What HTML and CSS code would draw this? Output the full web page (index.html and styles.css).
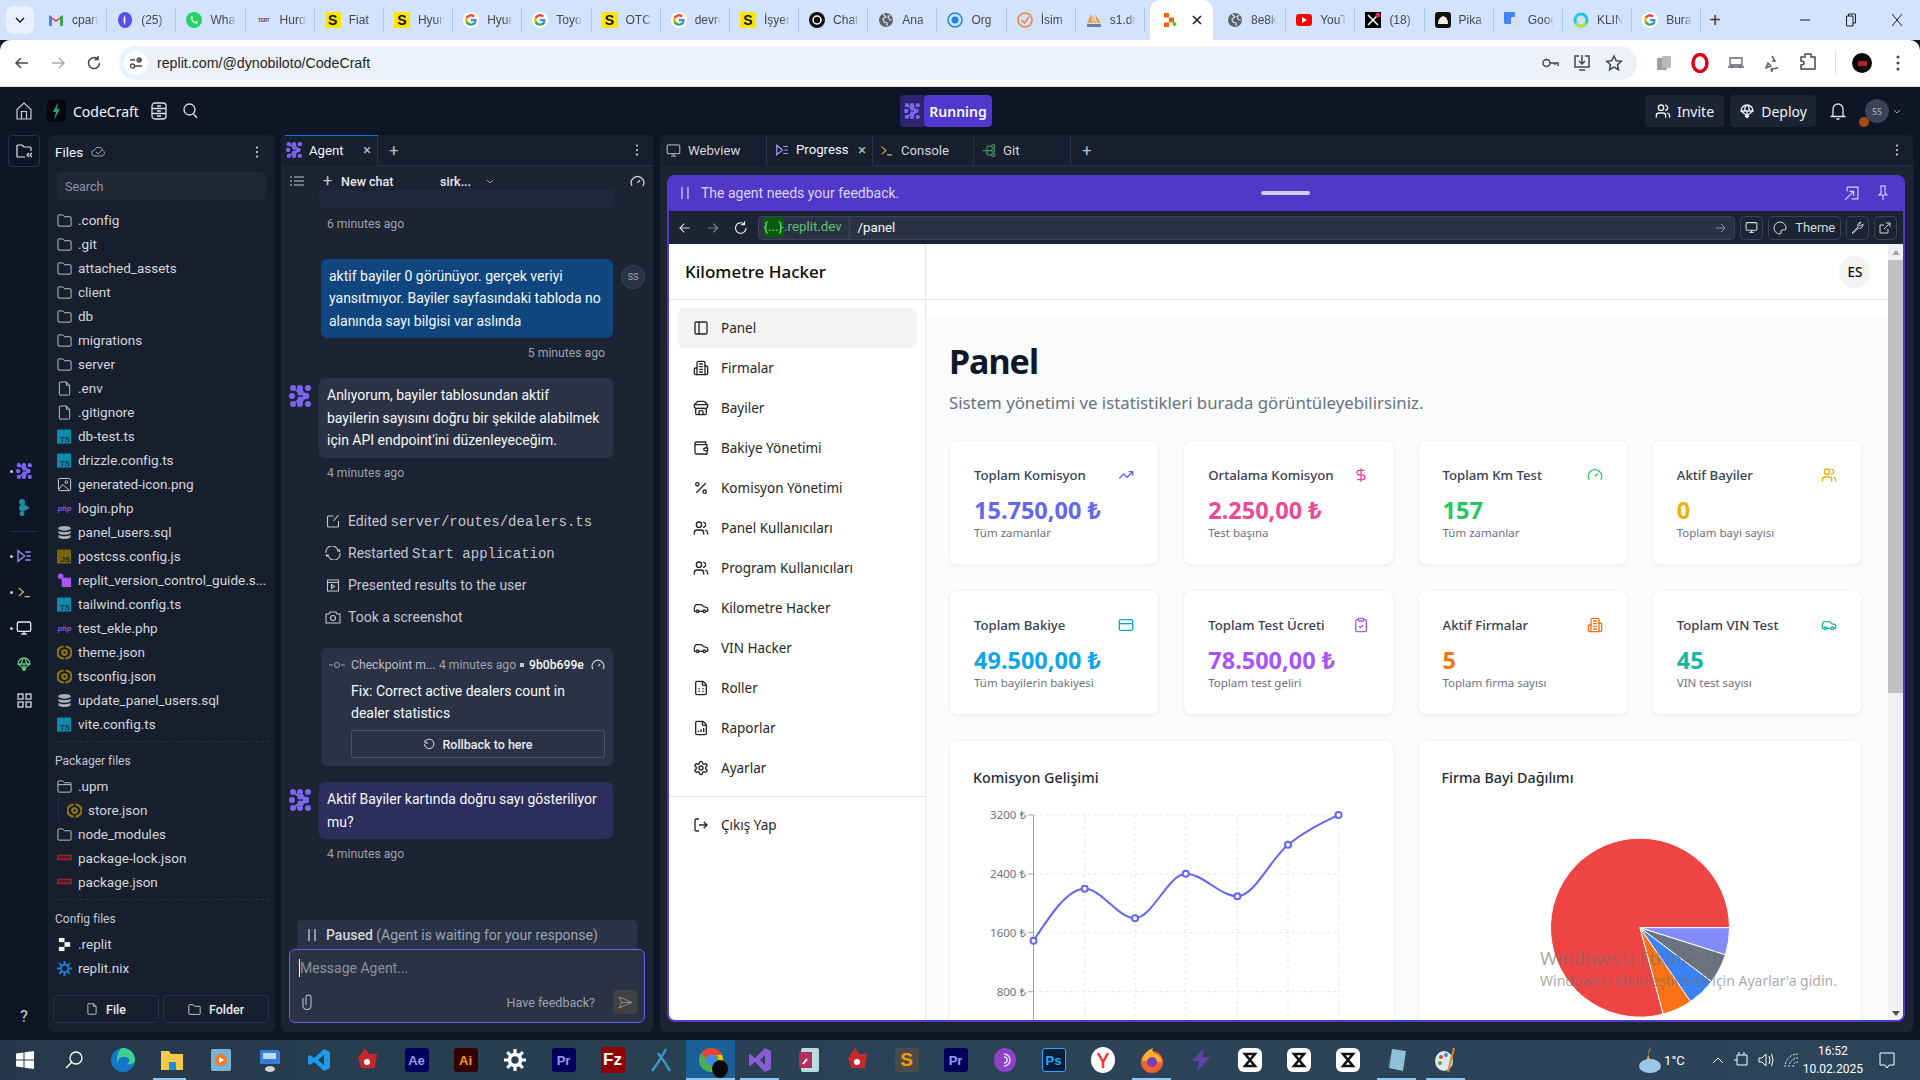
FILE: index.html
```html
<!DOCTYPE html>
<html lang="tr">
<head>
    <meta charset="UTF-8">
    <title>CodeCraft - Replit</title>
    <link rel="stylesheet" href="styles.css">
</head>
<body>
<svg class="defs" width="0" height="0">
    <symbol id="i-agent" viewBox="0 0 22 22"><g fill="#7c65f0"><circle cx="4" cy="3" r="3"/><circle cx="11" cy="3" r="3"/><circle cx="19" cy="3" r="3"/><circle cx="3" cy="11" r="3"/><circle cx="11" cy="8" r="2.6"/><circle cx="17" cy="11" r="3.2"/><circle cx="11" cy="14" r="2.6"/><circle cx="4" cy="19" r="3"/><circle cx="11" cy="19" r="3"/><circle cx="19" cy="19" r="3"/></g><path d="M4 3l7 5 6 3-6 3-7 5M11 3l6 8-6 8" fill="none" stroke="#7c65f0" stroke-width="2"/></symbol>
    <symbol id="i-folder" viewBox="0 0 16 16"><path fill="none" stroke="currentColor" d="M1 13V3q0-1 1-1h4l2 2h6q1 0 1 1v8q0 1-1 1H2q-1 0-1-1z"/></symbol>
    <symbol id="i-openfolder" viewBox="0 0 16 16"><path fill="none" stroke="currentColor" d="M1 13V3q0-1 1-1h4l2 2h6q1 0 1 1v1H1m0 7q0 1 1 1h12q1 0 1-1V6"/></symbol>
    <symbol id="i-file" viewBox="0 0 16 16"><path fill="none" stroke="currentColor" d="M2.5 2q0-1 1-1H10l3.5 3.5V14q0 1-1 1h-9q-1 0-1-1zM10 1v3.5h3.5"/></symbol>
    <symbol id="i-ts" viewBox="0 0 16 16"><rect width="15" height="15" y=".5" fill="#0c8ba8"/><text x="14" y="14" font-size="8.5" font-weight="700" text-anchor="end" fill="#153447" font-family="Liberation Sans">TS</text></symbol>
    <symbol id="i-js" viewBox="0 0 16 16"><rect width="15" height="15" y=".5" fill="#7a6408"/><text x="14" y="14" font-size="8.5" font-weight="700" text-anchor="end" fill="#1c2333" font-family="Liberation Sans">JS</text></symbol>
    <symbol id="i-php" viewBox="0 0 16 16"><text x="8" y="11" font-size="8" font-style="italic" font-weight="700" text-anchor="middle" fill="#8b4fe0" font-family="Liberation Sans">php</text></symbol>
    <symbol id="i-db" viewBox="0 0 16 16"><g fill="#a8adb5"><ellipse cx="8" cy="3.5" rx="6.5" ry="2.5"/><path d="M1.5 6c1 2 12 2 13 0v2.5c-1 2.5-12 2.5-13 0zM1.5 10.500c1 2 12 2 13 0V13c-1 2.500-12 2.500-13 0z"/></g></symbol>
    <symbol id="i-json" viewBox="0 0 16 16"><g fill="none" stroke="#97780a" stroke-width="2.200"><path d="M7 1.500a6.500 6.500 0 0 0 0 13"/><path d="M9 14.500a6.500 6.500 0 0 0 0-13"/><circle cx="8" cy="8" r="2.500"/></g></symbol>
    <symbol id="i-npm" viewBox="0 0 16 16"><rect y="4" width="16" height="6" fill="#a02025"/><path fill="#171e2e" d="M2 5.500h3v3H4V6.500H3v2H2zM6 5.500h3v2H7v1H6zM10 5.500h4.500v3H14V6.500h-1v2h-.700V6.500h-1v2H10z"/></symbol>
    <symbol id="i-image" viewBox="0 0 16 16"><g fill="none" stroke="#d6d8dc"><rect x="1.500" y="1.500" width="13" height="13" rx="1.500"/><path d="M2 13l4-5 7 6"/><circle cx="10" cy="5.500" r="1.500"/></g></symbol>
    <symbol id="i-shape" viewBox="0 0 16 16"><circle cx="4" cy="3.500" r="3" fill="#a855f7"/><rect x="5" y="5" width="10" height="10" fill="#a855f7"/></symbol>
    <symbol id="i-replit" viewBox="0 0 16 16"><g fill="#f2f2f2"><rect x="2" y="1" width="6" height="4.500"/><rect x="8" y="5.500" width="6" height="5"/><rect x="2" y="10.500" width="6" height="4.500"/></g></symbol>
    <symbol id="i-replit-color" viewBox="0 0 16 16"><rect x="2" y="1" width="5" height="4.500" fill="#f26207"/><rect x="7" y="5.500" width="5" height="5" fill="#f26207"/><rect x="2" y="10.500" width="5" height="4.500" fill="#f26207"/><circle cx="12.500" cy="12" r="2" fill="#58c322"/></symbol>
    <symbol id="i-nix" viewBox="0 0 16 16"><g fill="none" stroke="#1b7fe0" stroke-width="2"><circle cx="8" cy="8" r="4"/><path d="M8 0v4M8 12v4M0 8h4M12 8h4M2.300 2.300l3 3M10.700 10.700l3 3M13.700 2.300l-3 3M5.300 10.700l-3 3"/></g></symbol>
    <symbol id="i-google" viewBox="0 0 16 16"><circle cx="8" cy="8" r="8" fill="#fff"/><path d="M13.500 8.200c0-.4 0-.8-.100-1.200H8v2.300h3.100a2.700 2.700 0 0 1-1.100 1.700v1.500h1.900a5.600 5.600 0 0 0 1.600-4.300z" fill="#4285f4"/><path d="M8 13.700c1.500 0 2.800-.5 3.900-1.400L10 10.800a3.500 3.500 0 0 1-5.300-1.900H2.800v1.500A5.700 5.700 0 0 0 8 13.700z" fill="#34a853"/><path d="M4.700 8.900a3.500 3.500 0 0 1 0-2.300V5.100H2.800a5.700 5.700 0 0 0 0 5.300z" fill="#fbbc05"/><path d="M8 4.600c.9 0 1.600.3 2.200.9l1.700-1.700A5.700 5.700 0 0 0 2.800 5.100l1.900 1.500A3.400 3.400 0 0 1 8 4.600z" fill="#ea4335"/></symbol>
    <symbol id="i-globe" viewBox="0 0 16 16"><circle cx="8" cy="8" r="7" fill="#5f6368"/><path d="M5 2l3 3-3 2 1 3 3 1v3M12 3l-2 2 2 3 2 0" fill="none" stroke="#d3e3fd" stroke-width="1.200"/></symbol>
    <symbol id="i-monitor" viewBox="0 0 24 24"><g fill="none" stroke="currentColor" stroke-width="2"><rect x="2" y="3" width="20" height="14" rx="2"/><path d="M8 21h8M12 17v4"/></g></symbol>
    <symbol id="i-progress" viewBox="0 0 24 24"><g fill="none" stroke="currentColor" stroke-width="2"><path d="M3 4v16l10-8zM14 6h8M16 12h6M14 18h8"/></g></symbol>
    <symbol id="i-console" viewBox="0 0 24 24"><path fill="none" stroke="currentColor" stroke-width="2" d="M3 5l8 7-8 7M13 20h9"/></symbol>
    <symbol id="i-git" viewBox="0 0 24 24"><g fill="none" stroke="currentColor" stroke-width="2"><circle cx="18" cy="5" r="2.500"/><circle cx="18" cy="19" r="2.500"/><circle cx="18" cy="12" r="2.500"/><path d="M1 12h14M8 12V7q0-2 2-2h5.500M8 12v5q0 2 2 2h5.500"/></g></symbol>
    <symbol id="i-deploy" viewBox="0 0 24 24"><g fill="none" stroke="currentColor" stroke-width="2"><path d="M3 12a9 9 0 0 1 18 0zM8.500 12c0-5 2-9 3.500-9s3.500 4 3.500 9M3 12l9 7 9-7M12 12v10M9 19l3 3 3-3"/></g></symbol>
    <symbol id="i-dots" viewBox="0 0 4 16"><g fill="currentColor"><circle cx="2" cy="2" r="1.500"/><circle cx="2" cy="8" r="1.500"/><circle cx="2" cy="14" r="1.500"/></g></symbol>
    <symbol id="i-gauge" viewBox="0 0 24 24"><path fill="none" stroke="currentColor" stroke-width="2" d="M12 14l4-4M3.340 19a10 10 0 1 1 17.320 0"/></symbol>
    <symbol id="i-car" viewBox="0 0 24 24"><g fill="none" stroke="currentColor" stroke-width="2" stroke-linecap="round" stroke-linejoin="round"><path d="M19 17h2c.6 0 1-.4 1-1v-3c0-.9-.7-1.700-1.500-1.900C18.700 10.600 16 10 16 10s-1.300-1.400-2.200-2.300c-.5-.4-1.100-.7-1.800-.7H5c-.6 0-1.100.4-1.400.9l-1.400 2.900A3.700 3.700 0 0 0 2 12v4c0 .6.4 1 1 1h2"/><circle cx="7" cy="17" r="2"/><path d="M9 17h6"/><circle cx="17" cy="17" r="2"/></g></symbol>
    <symbol id="i-users" viewBox="0 0 24 24"><g fill="none" stroke="currentColor" stroke-width="2" stroke-linecap="round" stroke-linejoin="round"><path d="M16 21v-2a4 4 0 0 0-4-4H6a4 4 0 0 0-4 4v2"/><circle cx="9" cy="7" r="4"/><path d="M22 21v-2a4 4 0 0 0-3-3.870M16 3.130a4 4 0 0 1 0 7.750"/></g></symbol>
    <symbol id="i-building" viewBox="0 0 24 24"><g fill="none" stroke="currentColor" stroke-width="2" stroke-linecap="round" stroke-linejoin="round"><path d="M6 22V4a2 2 0 0 1 2-2h8a2 2 0 0 1 2 2v18Z"/><path d="M6 12H4a2 2 0 0 0-2 2v6a2 2 0 0 0 2 2h2M18 9h2a2 2 0 0 1 2 2v9a2 2 0 0 1-2 2h-2M10 6h4M10 10h4M10 14h4M10 18h4"/></g></symbol>
    <symbol id="i-filebase" viewBox="0 0 24 24"><path fill="none" stroke="currentColor" stroke-width="2" stroke-linejoin="round" d="M15 2H6a2 2 0 0 0-2 2v16a2 2 0 0 0 2 2h12a2 2 0 0 0 2-2V7ZM14 2v4a2 2 0 0 0 2 2h4"/></symbol>
    <symbol id="i-capcut" viewBox="0 0 16 16"><path d="M3 2h10L3 14h10z" fill="none" stroke="#111" stroke-width="2.500"/></symbol>
</svg>

<!-- Chrome tabs -->
<div class="tabstrip">
    <div class="tab-search"><svg width="10" height="6" viewBox="0 0 10 6"><path d="M1 1l4 4 4-4" fill="none" stroke="#1f1f1f" stroke-width="1.500"/></svg></div>
    <div class="ctab"><svg class="fav" viewBox="0 0 16 16"><path d="M1 14V3l7 5 7-5v11h-3V7L8 10 4 7v7z" fill="#ea4335"/><path d="M1 14V3l3 2v9z" fill="#4285f4"/><path d="M12 14V5l3-2v11z" fill="#34a853"/></svg><span class="ctab-title">cpanel</span></div>
    <div class="ctab"><svg class="fav" viewBox="0 0 16 16"><ellipse cx="8" cy="8" rx="7" ry="8" fill="#5b4ee8"/><path d="M8 3q-3 5 0 10q1-5 0-10" fill="#fff"/></svg><span class="ctab-title">(25)</span></div>
    <div class="ctab"><svg class="fav" viewBox="0 0 16 16"><circle cx="8" cy="8" r="8" fill="#25d366"/><path d="M5 4q-1 2 1 5t5 3l1-2-2-1-1 1q-2-1-3-3l1-1-1-2z" fill="#fff"/></svg><span class="ctab-title">WhatsApp</span></div>
    <div class="ctab"><span class="fav fav-tgrt">TGRT</span><span class="ctab-title">Hurda</span></div>
    <div class="ctab"><span class="fav fav-s">S</span><span class="ctab-title">Fiat</span></div>
    <div class="ctab"><span class="fav fav-s">S</span><span class="ctab-title">Hyundai</span></div>
    <div class="ctab"><svg class="fav"><use href="#i-google"/></svg><span class="ctab-title">Hyundai</span></div>
    <div class="ctab"><svg class="fav"><use href="#i-google"/></svg><span class="ctab-title">Toyota</span></div>
    <div class="ctab"><span class="fav fav-s">S</span><span class="ctab-title">OTC</span></div>
    <div class="ctab"><svg class="fav"><use href="#i-google"/></svg><span class="ctab-title">devre</span></div>
    <div class="ctab"><span class="fav fav-s">S</span><span class="ctab-title">İşyeri</span></div>
    <div class="ctab"><svg class="fav" viewBox="0 0 16 16"><circle cx="8" cy="8" r="8" fill="#111"/><circle cx="8" cy="8" r="4" fill="none" stroke="#fff" stroke-width="1.500"/></svg><span class="ctab-title">Chat</span></div>
    <div class="ctab"><svg class="fav"><use href="#i-globe"/></svg><span class="ctab-title">Ana</span></div>
    <div class="ctab"><svg class="fav" viewBox="0 0 16 16"><circle cx="8" cy="8" r="7" fill="none" stroke="#1a86e8" stroke-width="1.500"/><circle cx="8" cy="8" r="3.500" fill="#1a86e8"/></svg><span class="ctab-title">Org</span></div>
    <div class="ctab"><svg class="fav" viewBox="0 0 16 16"><circle cx="8" cy="8" r="7" fill="none" stroke="#f0813a" stroke-width="1.500"/><path d="M4.500 8l3 3 4.500-6" fill="none" stroke="#f0813a" stroke-width="1.500"/></svg><span class="ctab-title">İsim</span></div>
    <div class="ctab"><svg class="fav" viewBox="0 0 16 16"><path d="M1 11L5 2l2 9zM6 2l2 9h2zM9 2l2 9h4z" fill="#e8a33d"/><rect x="1" y="12" width="14" height="3" fill="#6c78af"/></svg><span class="ctab-title">s1.dns</span></div>
    <div class="ctab ctab-active"><svg class="fav"><use href="#i-replit-color"/></svg><svg class="ctab-close" width="10" height="10" viewBox="0 0 10 10"><path d="M1 1l8 8M9 1l-8 8" stroke="#1f1f1f" stroke-width="1.500"/></svg></div>
    <div class="ctab"><svg class="fav"><use href="#i-globe"/></svg><span class="ctab-title">8e8k</span></div>
    <div class="ctab"><svg class="fav" viewBox="0 0 16 16"><rect y="2" width="16" height="12" rx="3" fill="#f00"/><path d="M6 5l5 3-5 3z" fill="#fff"/></svg><span class="ctab-title">YouTube</span></div>
    <div class="ctab"><svg class="fav" viewBox="0 0 16 16"><rect width="16" height="16" fill="#000"/><path d="M3 3l10 10M13 3L3 13" stroke="#fff" stroke-width="1.500"/><circle cx="13" cy="3" r="2.500" fill="#e0245e"/></svg><span class="ctab-title">(18)</span></div>
    <div class="ctab"><svg class="fav" viewBox="0 0 16 16"><rect width="16" height="16" rx="3" fill="#111"/><path d="M3 12q0-6 5-8 5 1 5 8z" fill="#f1eee6"/></svg><span class="ctab-title">Pika</span></div>
    <div class="ctab"><svg class="fav" viewBox="0 0 16 16"><rect width="11" height="12" rx="1" fill="#4285f4"/><rect x="7" y="5" width="9" height="11" rx="1" fill="#d9dfe9"/></svg><span class="ctab-title">Google</span></div>
    <div class="ctab"><svg class="fav" viewBox="0 0 16 16"><circle cx="8" cy="8" r="6" fill="none" stroke="#1cc8d8" stroke-width="3"/><path d="M3 11a6 6 0 0 0 10 0" fill="none" stroke="#b9e23a" stroke-width="3"/></svg><span class="ctab-title">KLING</span></div>
    <div class="ctab"><svg class="fav"><use href="#i-google"/></svg><span class="ctab-title">Buraya</span></div>
    <div class="tab-plus">+</div>
    <div class="win-controls">
        <svg width="12" height="12" viewBox="0 0 12 12"><path d="M1 6h10" stroke="#1f1f1f"/></svg>
        <svg width="12" height="14" viewBox="0 0 12 14"><path d="M3.500 3V1h7v9H8M1.500 3h6.500v10H1.500z" fill="none" stroke="#1f1f1f"/></svg>
        <svg width="12" height="14" viewBox="0 0 12 14"><path d="M1 1l10 12M11 1L1 13" stroke="#1f1f1f"/></svg>
    </div>
</div>
<div class="toolbar">
    <svg class="tool-ic" viewBox="0 0 16 16"><path d="M14 8H2M7 3L2 8l5 5" fill="none" stroke="#474747" stroke-width="1.500"/></svg>
    <svg class="tool-ic" viewBox="0 0 16 16"><path d="M2 8h12M9 3l5 5-5 5" fill="none" stroke="#a9acb0" stroke-width="1.500"/></svg>
    <svg class="tool-ic" viewBox="0 0 16 16"><path d="M13.500 8A5.500 5.500 0 1 1 11.500 3.800M12 1v3.500H8.500" fill="none" stroke="#474747" stroke-width="1.500"/></svg>
    <div class="omnibox">
        <span class="omni-tune"><svg width="14" height="14" viewBox="0 0 14 14"><g fill="none" stroke="#474747" stroke-width="1.300"><path d="M1 4h5M9 10h4"/><circle cx="3.500" cy="10" r="2"/><circle cx="10" cy="4" r="2"/><path d="M9 4h4M1 10h.500M5.500 10H9"/></g></svg></span>
        <span class="omni-url">replit.com/@dynobiloto/CodeCraft</span>
        <span class="omni-icons">
            <svg width="18" height="18" viewBox="0 0 18 18"><g fill="none" stroke="#474747" stroke-width="1.500"><circle cx="5.500" cy="9" r="3.500"/><path d="M9 9h8v3M14 9v2"/></g></svg>
            <svg width="18" height="18" viewBox="0 0 18 18"><path d="M6 2H2v11h14V2h-4M9 1v9M6 7l3 3 3-3M6 16h6" fill="none" stroke="#474747" stroke-width="1.500"/></svg>
            <svg width="18" height="18" viewBox="0 0 18 18"><path d="M9 2l2.200 4.700 5 .6-3.700 3.400 1 5L9 13.200 4.500 15.700l1-5L1.800 7.300l5-.6z" fill="none" stroke="#474747" stroke-width="1.500"/></svg>
        </span>
    </div>
    <div class="ext-icons">
        <svg width="18" height="18" viewBox="0 0 18 18"><rect x="2" y="4" width="10" height="12" rx="1" fill="#9aa0a6"/><rect x="7" y="2" width="9" height="12" rx="1" fill="#b7bbbf"/></svg>
        <svg width="18" height="20" viewBox="0 0 18 20"><ellipse cx="9" cy="10" rx="7" ry="8.500" fill="none" stroke="#e0001b" stroke-width="3.500"/></svg>
        <svg width="18" height="18" viewBox="0 0 18 18"><path d="M3 4h12v7H3zM1 13h16M5 11v3M13 11v3" fill="none" stroke="#5f6368" stroke-width="1.300"/></svg>
        <svg width="18" height="18" viewBox="0 0 18 18"><path d="M9 2l3 5-3 0M3 14l2-5 3 3zM15 14l-6 1v3l-1-3 7-1z" fill="none" stroke="#5f6368" stroke-width="1.500"/></svg>
        <svg width="18" height="20" viewBox="0 0 18 20"><path d="M6 4V1h6v3h4v12H2v-4q3 0 3-2T2 8V4z" fill="none" stroke="#474747" stroke-width="1.500"/></svg>
        <span class="ext-sep"></span>
        <span class="profile"><span class="profile-mark"></span></span>
        <svg width="4" height="16" class="ext-dots"><use href="#i-dots"/></svg>
    </div>
</div>

<!-- Replit top bar -->
<div class="topbar">
    <div class="top-left">
        <svg class="top-home" width="16" height="18" viewBox="0 0 16 18"><path d="M1 7.500L8 1l7 6.500V17H1zM5.500 17V9.500h5V17" fill="none" stroke="#c9ccd3" stroke-width="1.200"/></svg>
        <span class="repl-logo"><svg width="9" height="18" viewBox="0 0 9 18"><path d="M6 0L1 10h3l-2 8 6-11H5z" fill="#28a077"/></svg></span>
        <span class="repl-name">CodeCraft</span>
        <svg class="top-db" width="16" height="18" viewBox="0 0 16 18"><g fill="none" stroke="#dfe1e6" stroke-width="1.300"><rect x="1" y="1" width="14" height="16" rx="3"/><path d="M1 6.500h14M1 11.500h14M6 4h4M6 9h4M6 14h4"/></g></svg>
        <svg class="top-search" width="15" height="16" viewBox="0 0 15 16"><g fill="none" stroke="#dfe1e6" stroke-width="1.300"><circle cx="6.500" cy="6.500" r="5.500"/><path d="M10.500 11l3.500 4"/></g></svg>
    </div>
    <div class="run-btn">
        <span class="run-icon"><svg width="16" height="16"><use href="#i-agent"/></svg></span>
        <span class="run-label">Running</span>
    </div>
    <div class="top-right">
        <div class="top-btn"><svg width="16" height="16"><use href="#i-users"/></svg>Invite</div>
        <div class="top-btn"><svg width="16" height="16"><use href="#i-deploy"/></svg>Deploy</div>
        <svg class="top-bell" width="16" height="18" viewBox="0 0 16 18"><path d="M3 13V7a5 5 0 0 1 10 0v6l1.500 1.500h-13zM6.500 17h3" fill="none" stroke="#dfe1e6" stroke-width="1.300"/></svg>
        <span class="top-avatar">SS<i class="top-dot"></i></span>
        <svg width="8" height="5" viewBox="0 0 8 5"><path d="M1 1l3 3 3-3" fill="none" stroke="#9da2ae"/></svg>
    </div>
</div>

<div class="workspace">
    <!-- icon rail -->
    <nav class="rail">
        <div class="rail-toggle"><svg width="16" height="14" viewBox="0 0 16 14"><path d="M1 12V2q0-1 1-1h4l2 2h6q1 0 1 1v3M9 13H2q-1 0-1-1M13 9l-2 2 2 2M16 9l-2 2 2 2" fill="none" stroke="#e6e8ec" stroke-width="1.200"/></svg></div>
        <span class="rail-spacer"></span>
        <div class="rail-item rail-dot"><svg width="16" height="16"><use href="#i-agent"/></svg></div>
        <div class="rail-item"><svg width="11" height="17" viewBox="0 0 11 17"><g fill="#1f8ea3"><circle cx="3" cy="3" r="3"/><circle cx="3" cy="9" r="3"/><circle cx="3" cy="14.500" r="2.500"/><path d="M3 5h2l6 4-6 3H3z"/></g></svg></div>
        <hr class="rail-sep">
        <div class="rail-item rail-dot rail-purple"><svg width="16" height="16"><use href="#i-progress"/></svg></div>
        <div class="rail-item rail-dot rail-yellow"><svg width="14" height="14"><use href="#i-console"/></svg></div>
        <div class="rail-item rail-dot rail-white"><svg width="16" height="16"><use href="#i-monitor"/></svg></div>
        <div class="rail-item rail-green"><svg width="16" height="16"><use href="#i-deploy"/></svg></div>
        <div class="rail-item rail-white"><svg width="15" height="15" viewBox="0 0 15 15"><g fill="none" stroke="currentColor" stroke-width="1.200"><rect x="1" y="1" width="5" height="5"/><rect x="9" y="1" width="5" height="5"/><rect x="1" y="9" width="5" height="5"/><rect x="9" y="9" width="5" height="5"/></g></svg></div>
        <div class="rail-help">?</div>
    </nav>

    <!-- files -->
    <aside class="files">
        <div class="files-head">
            <span class="files-title">Files</span>
            <svg width="15" height="11" viewBox="0 0 15 11"><path d="M4 10a3 3 0 0 1-.500-6A4.500 4.500 0 0 1 12 4.500 3 3 0 0 1 11 10zM5 6l2 2 4-4" fill="none" stroke="#9da2ae"/></svg>
            <svg class="files-dots" width="4" height="12" viewBox="0 0 4 16"><use href="#i-dots"/></svg>
        </div>
        <div class="files-search">Search</div>
        <div class="file"><svg><use href="#i-folder"/></svg>.config</div>
        <div class="file"><svg><use href="#i-folder"/></svg>.git</div>
        <div class="file"><svg><use href="#i-folder"/></svg>attached_assets</div>
        <div class="file"><svg><use href="#i-folder"/></svg>client</div>
        <div class="file"><svg><use href="#i-folder"/></svg>db</div>
        <div class="file"><svg><use href="#i-folder"/></svg>migrations</div>
        <div class="file"><svg><use href="#i-folder"/></svg>server</div>
        <div class="file"><svg><use href="#i-file"/></svg>.env</div>
        <div class="file"><svg><use href="#i-file"/></svg>.gitignore</div>
        <div class="file"><svg><use href="#i-ts"/></svg>db-test.ts</div>
        <div class="file"><svg><use href="#i-ts"/></svg>drizzle.config.ts</div>
        <div class="file"><svg><use href="#i-image"/></svg>generated-icon.png</div>
        <div class="file"><svg><use href="#i-php"/></svg>login.php</div>
        <div class="file"><svg><use href="#i-db"/></svg>panel_users.sql</div>
        <div class="file"><svg><use href="#i-js"/></svg>postcss.config.js</div>
        <div class="file"><svg><use href="#i-shape"/></svg><span class="file-cut">replit_version_control_guide.s...</span></div>
        <div class="file"><svg><use href="#i-ts"/></svg>tailwind.config.ts</div>
        <div class="file"><svg><use href="#i-php"/></svg>test_ekle.php</div>
        <div class="file"><svg><use href="#i-json"/></svg>theme.json</div>
        <div class="file"><svg><use href="#i-json"/></svg>tsconfig.json</div>
        <div class="file"><svg><use href="#i-db"/></svg>update_panel_users.sql</div>
        <div class="file"><svg><use href="#i-ts"/></svg>vite.config.ts</div>
        <div class="files-group">Packager files</div>
        <div class="file"><svg><use href="#i-openfolder"/></svg>.upm</div>
        <div class="file file-nested"><svg><use href="#i-json"/></svg>store.json</div>
        <div class="file"><svg><use href="#i-folder"/></svg>node_modules</div>
        <div class="file"><svg><use href="#i-npm"/></svg>package-lock.json</div>
        <div class="file"><svg><use href="#i-npm"/></svg>package.json</div>
        <div class="files-group">Config files</div>
        <div class="file"><svg><use href="#i-replit"/></svg>.replit</div>
        <div class="file"><svg><use href="#i-nix"/></svg>replit.nix</div>
        <div class="files-actions">
            <div class="files-btn"><svg width="12" height="14" viewBox="0 0 16 16"><use href="#i-file"/></svg>File</div>
            <div class="files-btn"><svg width="13" height="13" viewBox="0 0 16 16"><use href="#i-folder"/></svg>Folder</div>
        </div>
    </aside>

    <!-- agent chat -->
    <section class="agent">
        <div class="agent-tabs">
            <div class="agent-tab"><svg width="16" height="16"><use href="#i-agent"/></svg>Agent<span class="tab-x">×</span></div>
            <span class="tabs-plus">+</span>
            <svg class="tabs-dots" width="4" height="12" viewBox="0 0 4 16"><use href="#i-dots"/></svg>
        </div>
        <div class="agent-bar">
            <svg width="14" height="10" viewBox="0 0 14 10"><path d="M4 1h10M4 5h10M4 9h10M0 1h2M0 5h2M0 9h2" stroke="#c5c8cf" stroke-width="1.200"/></svg>
            <span class="bar-plus">+</span>
            <span class="bar-new">New chat</span>
            <span class="bar-name">sirk...</span>
            <svg width="8" height="5" viewBox="0 0 8 5"><path d="M1 1l3 3 3-3" fill="none" stroke="#9da2ae"/></svg>
            <svg class="bar-gauge" width="15" height="15"><use href="#i-gauge"/></svg>
        </div>
        <div class="chat">
            <div class="bubble-clip"></div>
            <div class="stamp stamp-first">6 minutes ago</div>
            <div class="msg-user">
                <div class="bubble bubble-user">aktif bayiler 0 görünüyor. gerçek veriyi yansıtmıyor. Bayiler sayfasındaki tabloda no alanında sayı bilgisi var aslında</div>
                <span class="chat-avatar">SS</span>
            </div>
            <div class="stamp stamp-right">5 minutes ago</div>
            <div class="msg-agent">
                <svg width="22" height="22"><use href="#i-agent"/></svg>
                <div class="bubble bubble-agent">Anlıyorum, bayiler tablosundan aktif<br>bayilerin sayısını doğru bir şekilde alabilmek için API endpoint'ini düzenleyeceğim.</div>
            </div>
            <div class="stamp">4 minutes ago</div>
            <ul class="actions">
                <li><svg width="13" height="14" viewBox="0 0 13 14"><path d="M12 7v5q0 1-1 1H2q-1 0-1-1V3q0-1 1-1h5M7 7l5-6" fill="none" stroke="currentColor" stroke-width="1.100"/></svg><span>Edited <code>server/routes/dealers.ts</code></span></li>
                <li><svg width="16" height="14" viewBox="0 0 16 14"><path d="M1 7a6 6 0 0 1 12-2l1.500-1.500M15 7A6 6 0 0 1 3 9L1.500 10.500M14.500 6V3.500M1.500 8v2.500" fill="none" stroke="currentColor" stroke-width="1.100"/></svg><span>Restarted <code>Start application</code></span></li>
                <li><svg width="13" height="13" viewBox="0 0 13 13"><path d="M1 1h11v11H1zM1 3.500h11M5 5.500l3 2-3 2z" fill="none" stroke="currentColor" stroke-width="1.100"/></svg><span>Presented results to the user</span></li>
                <li><svg width="16" height="13" viewBox="0 0 16 13"><path d="M1 3h3l1-2h6l1 2h3v9H1z" fill="none" stroke="currentColor" stroke-width="1.100"/><circle cx="8" cy="7" r="2.500" fill="none" stroke="currentColor" stroke-width="1.100"/></svg><span>Took a screenshot</span></li>
            </ul>
            <div class="checkpoint">
                <div class="check-row">
                    <svg width="16" height="6" viewBox="0 0 16 6"><path d="M0 3h4M12 3h4" stroke="#9da2ae"/><circle cx="8" cy="3" r="2.500" fill="none" stroke="#9da2ae"/></svg>
                    <span class="check-name">Checkpoint m...</span>
                    <span class="check-time">4 minutes ago</span>
                    <i class="check-sep"></i>
                    <span class="check-hash">9b0b699e</span>
                    <svg class="check-gauge" width="14" height="14"><use href="#i-gauge"/></svg>
                </div>
                <div class="check-msg">Fix: Correct active dealers count in dealer statistics</div>
                <div class="check-btn"><svg width="12" height="12" viewBox="0 0 12 12"><path d="M2 2v3h3M1.500 6A4.700 4.700 0 1 0 2.500 3" fill="none" stroke="#e0e2e6"/></svg>Rollback to here</div>
            </div>
            <div class="msg-agent msg-ask">
                <svg width="22" height="22"><use href="#i-agent"/></svg>
                <div class="bubble bubble-ask">Aktif Bayiler kartında doğru sayı gösteriliyor mu?</div>
            </div>
            <div class="stamp">4 minutes ago</div>
        </div>
        <div class="paused"><svg width="8" height="12" viewBox="0 0 8 12"><path d="M1 0v12M7 0v12" stroke="#d5d7dc" stroke-width="1.200"/></svg><span><b>Paused</b> (Agent is waiting for your response)</span></div>
        <div class="composer">
            <div class="composer-input"><i class="caret"></i>Message Agent...</div>
            <div class="composer-foot">
                <svg width="12" height="16" viewBox="0 0 12 16"><path d="M2 4v8a4 3.500 0 0 0 8 0V3.500a2.500 2.500 0 0 0-5 0V11" fill="none" stroke="#b9bcc4" stroke-width="1.100"/></svg>
                <span class="feedback">Have feedback?</span>
                <span class="send"><svg width="15" height="13" viewBox="0 0 15 13"><path d="M1 1l13 5.500L1 12l2.500-5.500zM3.500 6.500H14" fill="none" stroke="#8d8d8f"/></svg></span>
            </div>
        </div>
    </section>

    <!-- right pane -->
    <section class="pane">
        <div class="pane-tabs">
            <div class="pane-tab pane-tab-webview"><svg width="15" height="15" class="tc-gray"><use href="#i-monitor"/></svg>Webview</div>
            <div class="pane-tab pane-tab-on"><svg width="14" height="14" class="tc-purple"><use href="#i-progress"/></svg>Progress<span class="tab-x">×</span></div>
            <div class="pane-tab pane-tab-console"><svg width="13" height="13" class="tc-yellow"><use href="#i-console"/></svg>Console</div>
            <div class="pane-tab pane-tab-git"><svg width="15" height="15" class="tc-green"><use href="#i-git"/></svg>Git</div>
            <span class="tabs-plus">+</span>
            <svg class="tabs-dots" width="4" height="12" viewBox="0 0 4 16"><use href="#i-dots"/></svg>
        </div>
        <div class="pane-body">
            <div class="webframe">
                <div class="feedback-bar">
                    <svg width="8" height="12" viewBox="0 0 8 12"><path d="M1 0v12M7 0v12" stroke="#d9d5f5" stroke-width="1.200"/></svg>
                    <span class="feedback-text">The agent needs your feedback.</span>
                    <span class="drag-handle"></span>
                    <svg width="15" height="15" viewBox="0 0 14 14"><path d="M3 1h10v11H7M3 1v4M1 13l8-8M5 5h4v4" fill="none" stroke="#d9d5f5" stroke-width="1.100"/></svg>
                    <svg class="pin" width="10" height="16" viewBox="0 0 10 16"><path d="M2 1h6M3 1v7L1 10h8L7 8V1M5 10v5" fill="none" stroke="#d9d5f5" stroke-width="1.100"/></svg>
                </div>
                <div class="web-tools">
                    <svg width="12" height="12" viewBox="0 0 12 12"><path d="M11 6H1M5.500 1.500L1 6l4.500 4.500" fill="none" stroke="#d5d7dc" stroke-width="1.200"/></svg>
                    <svg width="12" height="12" viewBox="0 0 12 12"><path d="M1 6h10M6.500 1.500L11 6l-4.500 4.500" fill="none" stroke="#7d828e" stroke-width="1.200"/></svg>
                    <svg width="14" height="14" viewBox="0 0 14 14"><path d="M12.500 7A5.500 5.500 0 1 1 10.500 2.800M11 0v3.500H7.500" fill="none" stroke="#e6e8ec" stroke-width="1.200"/></svg>
                    <div class="url-field">
                        <span class="url-host"><b>{...}</b>.replit.dev</span>
                        <span class="url-path">/panel</span>
                        <svg width="11" height="10" viewBox="0 0 11 10"><path d="M1 5h9M6 1l4 4-4 4" fill="none" stroke="#8b909c"/></svg>
                    </div>
                    <span class="web-btn"><svg width="13" height="13"><use href="#i-monitor"/></svg></span>
                    <span class="web-btn web-btn-wide"><svg width="14" height="14" viewBox="0 0 14 14"><path d="M7 1a6 6 0 1 0 0 12q1.500 0 1-2t1-2h3q1 0 1-2a6 6 0 0 0-6-6z" fill="none" stroke="#d5d7dc"/></svg>Theme</span>
                    <span class="web-btn"><svg width="13" height="13" viewBox="0 0 13 13"><path d="M1 12l6-6q-1-3 1.500-4.500L10 1 8 3.500 9.500 5 12 3q0 3-2 4-1.500.5-2.500 0l-5.500 5.500z" fill="none" stroke="#d5d7dc"/></svg></span>
                    <span class="web-btn"><svg width="12" height="12" viewBox="0 0 12 12"><path d="M9 7v4H1V3h4M7 1h4v4M11 1L5 7" fill="none" stroke="#d5d7dc"/></svg></span>
                </div>
                <div class="page">
                    <aside class="side">
                        <div class="side-brand">Kilometre Hacker</div>
                        <ul class="side-nav">
                            <li class="side-on"><svg viewBox="0 0 24 24"><g fill="none" stroke="currentColor" stroke-width="2"><rect x="3" y="3" width="18" height="18" rx="2"/><path d="M9 3v18"/></g></svg>Panel</li>
                            <li><svg><use href="#i-building"/></svg>Firmalar</li>
                            <li><svg viewBox="0 0 24 24"><g fill="none" stroke="currentColor" stroke-width="2" stroke-linecap="round" stroke-linejoin="round"><path d="M2 7l4.410-4.410A2 2 0 0 1 7.830 2h8.340a2 2 0 0 1 1.420.59L22 7M4 12v8a2 2 0 0 0 2 2h12a2 2 0 0 0 2-2v-8M15 22v-4a2 2 0 0 0-2-2h-2a2 2 0 0 0-2 2v4M2 7h20M22 7v3a2 2 0 0 1-2 2 2.700 2.700 0 0 1-4 0 2.700 2.700 0 0 1-4 0 2.700 2.700 0 0 1-4 0 2.700 2.700 0 0 1-4 0 2 2 0 0 1-2-2V7"/></g></svg>Bayiler</li>
                            <li><svg viewBox="0 0 24 24"><path fill="none" stroke="currentColor" stroke-width="2" stroke-linejoin="round" d="M21 12V7H5a2 2 0 0 1 0-4h14v4M3 5v14a2 2 0 0 0 2 2h16v-5M18 12a2 2 0 0 0 0 4h4v-4Z"/></svg>Bakiye Yönetimi</li>
                            <li><svg viewBox="0 0 24 24"><g fill="none" stroke="currentColor" stroke-width="2"><path d="M19 5L5 19"/><circle cx="6.500" cy="6.500" r="2.500"/><circle cx="17.500" cy="17.500" r="2.500"/></g></svg>Komisyon Yönetimi</li>
                            <li><svg><use href="#i-users"/></svg>Panel Kullanıcıları</li>
                            <li><svg><use href="#i-users"/></svg>Program Kullanıcıları</li>
                            <li><svg><use href="#i-car"/></svg>Kilometre Hacker</li>
                            <li><svg><use href="#i-car"/></svg>VIN Hacker</li>
                            <li><svg viewBox="0 0 24 24"><use href="#i-filebase"/><path d="M8 13h2M14 13h2M8 17h2M14 17h2" stroke="currentColor" stroke-width="2"/></svg>Roller</li>
                            <li><svg viewBox="0 0 24 24"><use href="#i-filebase"/><path d="M8 18v-2M12 18v-4M16 18v-6" stroke="currentColor" stroke-width="2"/></svg>Raporlar</li>
                            <li><svg viewBox="0 0 24 24"><g fill="none" stroke="currentColor" stroke-width="2" stroke-linecap="round" stroke-linejoin="round"><path d="M12.220 2h-.44a2 2 0 0 0-2 2v.18a2 2 0 0 1-1 1.730l-.43.25a2 2 0 0 1-2 0l-.15-.08a2 2 0 0 0-2.730.73l-.22.38a2 2 0 0 0 .73 2.730l.15.1a2 2 0 0 1 1 1.720v.51a2 2 0 0 1-1 1.740l-.15.09a2 2 0 0 0-.73 2.730l.22.38a2 2 0 0 0 2.730.73l.15-.08a2 2 0 0 1 2 0l.43.25a2 2 0 0 1 1 1.730V20a2 2 0 0 0 2 2h.44a2 2 0 0 0 2-2v-.18a2 2 0 0 1 1-1.730l.43-.25a2 2 0 0 1 2 0l.15.08a2 2 0 0 0 2.730-.73l.22-.39a2 2 0 0 0-.73-2.730l-.15-.08a2 2 0 0 1-1-1.740v-.5a2 2 0 0 1 1-1.740l.15-.09a2 2 0 0 0 .73-2.730l-.22-.38a2 2 0 0 0-2.730-.73l-.15.08a2 2 0 0 1-2 0l-.43-.25a2 2 0 0 1-1-1.730V4a2 2 0 0 0-2-2z"/><circle cx="12" cy="12" r="3"/></g></svg>Ayarlar</li>
                        </ul>
                        <div class="side-foot">
                            <div class="side-exit"><svg viewBox="0 0 24 24"><path fill="none" stroke="currentColor" stroke-width="2" d="M9 21H5a2 2 0 0 1-2-2V5a2 2 0 0 1 2-2h4M16 17l5-5-5-5M21 12H9"/></svg>Çıkış Yap</div>
                        </div>
                    </aside>
                    <div class="main">
                        <div class="main-head"><span class="user-chip">ES</span></div>
                        <div class="main-body">
                            <h1>Panel</h1>
                            <p class="lead">Sistem yönetimi ve istatistikleri burada görüntüleyebilirsiniz.</p>
                            <div class="stats">
                                <div class="stat c-indigo">
                                    <div class="stat-top">Toplam Komisyon<svg viewBox="0 0 24 24"><path fill="none" stroke="currentColor" stroke-width="2" d="M22 7l-8.500 8.500-5-5L2 17M16 7h6v6"/></svg></div>
                                    <div class="stat-val">15.750,00 ₺</div>
                                    <div class="stat-sub">Tüm zamanlar</div>
                                </div>
                                <div class="stat c-pink">
                                    <div class="stat-top">Ortalama Komisyon<svg viewBox="0 0 24 24"><path fill="none" stroke="currentColor" stroke-width="2" d="M12 2v20M17 5H9.500a3.500 3.500 0 0 0 0 7h5a3.500 3.500 0 0 1 0 7H6"/></svg></div>
                                    <div class="stat-val">2.250,00 ₺</div>
                                    <div class="stat-sub">Test başına</div>
                                </div>
                                <div class="stat c-green">
                                    <div class="stat-top">Toplam Km Test<svg><use href="#i-gauge"/></svg></div>
                                    <div class="stat-val">157</div>
                                    <div class="stat-sub">Tüm zamanlar</div>
                                </div>
                                <div class="stat c-amber">
                                    <div class="stat-top">Aktif Bayiler<svg><use href="#i-users"/></svg></div>
                                    <div class="stat-val">0</div>
                                    <div class="stat-sub">Toplam bayi sayısı</div>
                                </div>
                                <div class="stat c-sky">
                                    <div class="stat-top">Toplam Bakiye<svg viewBox="0 0 24 24"><g fill="none" stroke="currentColor" stroke-width="2"><rect x="2" y="4" width="20" height="16" rx="2"/><path d="M2 10h20"/></g></svg></div>
                                    <div class="stat-val">49.500,00 ₺</div>
                                    <div class="stat-sub">Tüm bayilerin bakiyesi</div>
                                </div>
                                <div class="stat c-purple">
                                    <div class="stat-top">Toplam Test Ücreti<svg viewBox="0 0 24 24"><g fill="none" stroke="currentColor" stroke-width="2"><rect x="8" y="2" width="8" height="4" rx="1"/><path d="M16 4h2a2 2 0 0 1 2 2v14a2 2 0 0 1-2 2H6a2 2 0 0 1-2-2V6a2 2 0 0 1 2-2h2M9 14l2 2 4-4"/></g></svg></div>
                                    <div class="stat-val">78.500,00 ₺</div>
                                    <div class="stat-sub">Toplam test geliri</div>
                                </div>
                                <div class="stat c-orange">
                                    <div class="stat-top">Aktif Firmalar<svg><use href="#i-building"/></svg></div>
                                    <div class="stat-val">5</div>
                                    <div class="stat-sub">Toplam firma sayısı</div>
                                </div>
                                <div class="stat c-teal">
                                    <div class="stat-top">Toplam VIN Test<svg><use href="#i-car"/></svg></div>
                                    <div class="stat-val">45</div>
                                    <div class="stat-sub">VIN test sayısı</div>
                                </div>
                            </div>
                            <div class="charts">
                                <div class="chart-card">
                                    <h3>Komisyon Gelişimi</h3>
                                    <svg class="chart" viewBox="973 800 395 240">
                                        <g class="grid-lines">
                                            <path d="M1033.500 815H1338.500M1033.500 874H1338.500M1033.500 932.700H1338.500M1033.500 991.700H1338.500M1084.700 815V1040M1135 815V1040M1185.700 815V1040M1237.400 815V1040M1288 815V1040M1338.500 815V1040"/>
                                        </g>
                                        <path class="axis" d="M1033.500 815V1040M1028 815h5.500M1028 874h5.500M1028 932.700h5.500M1028 991.700h5.500"/>
                                        <g class="axis-text">
                                            <text x="1026" y="819">3200 ₺</text>
                                            <text x="1026" y="878">2400 ₺</text>
                                            <text x="1026" y="937">1600 ₺</text>
                                            <text x="1026" y="996">800 ₺</text>
                                        </g>
                                        <path class="line" d="M1033.500 940.700C1050.600 914.700 1067.600 888.700 1084.700 888.700C1101.500 888.700 1118.200 918.300 1135 918.300C1151.900 918.300 1168.800 873.700 1185.700 873.700C1202.900 873.700 1220.200 896.300 1237.400 896.300C1254.300 896.300 1271.100 858.300 1288 844.700C1304.800 831.200 1321.700 823.100 1338.500 815"/>
                                        <g class="dots">
                                            <circle cx="1033.500" cy="940.700" r="3"/><circle cx="1084.700" cy="888.700" r="3"/><circle cx="1135" cy="918.300" r="3"/><circle cx="1185.700" cy="873.700" r="3"/><circle cx="1237.400" cy="896.300" r="3"/><circle cx="1288" cy="844.700" r="3"/><circle cx="1338.500" cy="815" r="3"/>
                                        </g>
                                    </svg>
                                </div>
                                <div class="chart-card">
                                    <h3>Firma Bayi Dağılımı</h3>
                                    <svg class="chart" viewBox="1443 801 395 240">
                                        <g stroke="#fff" stroke-width="1">
                                            <path fill="#ef4444" d="M1641 928.700L1664.200 1015.100A89.500 89.500 0 1 1 1730.500 928.700Z"/>
                                            <path fill="#818cf8" d="M1641 928.700H1730.500A89.500 89.500 0 0 1 1726.300 955.800Z"/>
                                            <path fill="#6b7280" d="M1641 928.700L1726.300 955.800A89.500 89.500 0 0 1 1712.500 982.600Z"/>
                                            <path fill="#3b82f6" d="M1641 928.700L1712.500 982.600A89.500 89.500 0 0 1 1691.500 1002.600Z"/>
                                            <path fill="#f97316" d="M1641 928.700L1691.500 1002.600A89.500 89.500 0 0 1 1664.200 1015.100Z"/>
                                        </g>
                                    </svg>
                                </div>
                            </div>
                        </div>
                    </div>
                    <div class="scrollbar"><i class="arrow-up"></i><span class="thumb"></span><i class="arrow-down"></i></div>
                </div>
            </div>
        </div>
    </section>
</div>

<!-- Windows taskbar -->
<div class="taskbar">
    <div class="task-apps">
        <span class="app"><svg width="18" height="18" viewBox="0 0 18 18"><path fill="#fff" d="M0 2.500l7.500-1v7H0zM8.500 1.300L18 0v8.500H8.500zM0 9.500h7.500v7L0 15.500zM8.500 9.500H18V18l-9.500-1.300z"/></svg></span>
        <span class="app"><svg width="20" height="20" viewBox="0 0 20 20"><circle cx="12" cy="8" r="6" fill="none" stroke="#fff" stroke-width="1.300"/><path d="M8 12l-6 6" stroke="#fff" stroke-width="1.500"/></svg></span>
        <span class="app"><svg width="26" height="26" viewBox="0 0 26 26"><circle cx="13" cy="13" r="12" fill="#1576c8"/><path d="M13 1a12 12 0 0 1 12 12c0 3-4 5-8 4 2-1 3-3 2-5-3-4-11-3-12 4-.5-7 2-15 6-15z" fill="#3fcf8e"/></svg></span>
        <span class="app app-run-short"><svg width="24" height="22" viewBox="0 0 24 22"><path d="M1 2h8l2 3h12v16H1z" fill="#f7c948"/><rect x="9" y="13" width="7" height="8" fill="#1a8fe0"/></svg></span>
        <span class="app"><svg width="22" height="24" viewBox="0 0 22 24"><rect x="1" y="1" width="20" height="22" rx="2" fill="#79b4d6"/><circle cx="11" cy="12" r="6" fill="#f27b21"/><path d="M9 9l5 3-5 3z" fill="#fff"/></svg></span>
        <span class="app"><svg width="24" height="24" viewBox="0 0 24 24"><path d="M2 2h18l2 2v12H2z" fill="#3a7bd5"/><rect x="5" y="5" width="13" height="6" fill="#bcdcf4"/><ellipse cx="12" cy="21" rx="5" ry="3" fill="#cfd3d7"/></svg></span>
        <span class="app"><svg width="24" height="24" viewBox="0 0 24 24"><path d="M17 1l6 3v16l-6 3L7 14l-4 3-2-1V8l2-1 4 3zM17 7l-6 5 6 5z" fill="#1e9be8"/></svg></span>
        <span class="app"><svg width="22" height="26" viewBox="0 0 22 26"><path d="M8 1l4 6h8l-2 14H4L1 11z" fill="#c6262e"/><circle cx="10" cy="15" r="3" fill="#fff"/></svg></span>
        <span class="app"><span class="tile tile-ae">Ae</span></span>
        <span class="app"><span class="tile tile-ai">Ai</span></span>
        <span class="app"><svg width="22" height="22" viewBox="0 0 24 24"><circle cx="12" cy="12" r="6" fill="none" stroke="#fff" stroke-width="4"/><path d="M12 0v5M12 19v5M0 12h5M19 12h5M3.500 3.500l3.500 3.500M17 17l3.500 3.500M20.500 3.500L17 7M7 17l-3.500 3.500" stroke="#fff" stroke-width="3.500"/></svg></span>
        <span class="app"><span class="tile tile-pr">Pr</span></span>
        <span class="app"><span class="tile tile-fz">Fz</span></span>
        <span class="app"><svg width="24" height="26" viewBox="0 0 24 26"><path d="M16 2Q9 15 2 24M8 6q7 9 12 18" fill="none" stroke="#3f95c9" stroke-width="2.500"/></svg></span>
        <span class="app app-active"><svg width="26" height="26" viewBox="0 0 26 26"><circle cx="13" cy="13" r="12" fill="#4caf50"/><path d="M13 1a12 12 0 0 1 11 7H13a5 5 0 0 0-5 4L3.500 6A12 12 0 0 1 13 1z" fill="#ea4335"/><path d="M24 8a12 12 0 0 1-11 17l5-8a5 5 0 0 0 0-9z" fill="#fbbc05"/><circle cx="13" cy="13" r="5" fill="#4285f4"/></svg><i class="chrome-badge"></i></span>
        <span class="app app-run"><svg width="24" height="26" viewBox="0 0 24 26"><path d="M17 1l6 3v18l-6 3L7 15l-5 4-1-1V8l1-1 5 4zM17 8l-5 5 5 5z" fill="#8a5cd6"/></svg></span>
        <span class="app"><svg width="22" height="26" viewBox="0 0 22 26"><rect x="3" y="1" width="18" height="24" rx="2" fill="#b7dce2"/><rect x="1" y="5" width="13" height="16" fill="#b1305e"/><path d="M5 17l4-5" stroke="#fff" stroke-width="2"/></svg></span>
        <span class="app"><svg width="22" height="26" viewBox="0 0 22 26"><path d="M8 1l4 6h8l-2 14H4L1 11z" fill="#c6262e"/><circle cx="10" cy="15" r="3" fill="#fff"/></svg></span>
        <span class="app"><span class="tile tile-sublime">S</span></span>
        <span class="app"><span class="tile tile-pr">Pr</span></span>
        <span class="app"><svg width="24" height="26" viewBox="0 0 24 26"><ellipse cx="12" cy="13" rx="11" ry="12" fill="#8e44c9"/><path d="M11 7a6 6 0 0 1 0 12M11 10a3 3 0 0 1 0 6" fill="none" stroke="#e8d7f7" stroke-width="1.500"/></svg></span>
        <span class="app"><span class="tile tile-ps">Ps</span></span>
        <span class="app"><svg width="24" height="26" viewBox="0 0 24 26"><ellipse cx="12" cy="13" rx="12" ry="13" fill="#fff"/><path d="M7 6l5 9 5-9M12 15v6" fill="none" stroke="#f33" stroke-width="2.500"/></svg></span>
        <span class="app app-run"><svg width="24" height="26" viewBox="0 0 24 26"><circle cx="12" cy="15" r="11" fill="#f2622e"/><path d="M2 14Q4 4 13 1q-2 4 3 6t6 8z" fill="#ffb02e"/><circle cx="12" cy="15" r="5" fill="#7a3db8"/></svg></span>
        <span class="app"><svg width="22" height="26" viewBox="0 0 22 26"><path d="M14 1L2 14h7l-2 11 13-15h-8z" fill="#5a45a5"/></svg></span>
        <span class="app"><span class="tile tile-cap"><svg width="16" height="16"><use href="#i-capcut"/></svg></span></span>
        <span class="app"><span class="tile tile-cap"><svg width="16" height="16"><use href="#i-capcut"/></svg></span></span>
        <span class="app"><span class="tile tile-cap"><svg width="16" height="16"><use href="#i-capcut"/></svg></span></span>
        <span class="app app-run"><svg width="22" height="24" viewBox="0 0 22 24"><path d="M6 1l14 2-3 20-14-3z" fill="#8fc2d8"/><path d="M6 1l-4 16 1 3 3-19z" fill="#4c6470"/></svg></span>
        <span class="app app-run"><svg width="24" height="26" viewBox="0 0 24 26"><ellipse cx="10" cy="14" rx="9" ry="10" fill="#dfe6ec"/><circle cx="7" cy="10" r="2" fill="#e04a3a"/><circle cx="12" cy="8" r="2" fill="#3a8fe0"/><circle cx="6" cy="16" r="2" fill="#49b052"/><path d="M20 1l-6 24" stroke="#d18a32" stroke-width="2"/></svg></span>
    </div>
    <div class="tray">
        <svg class="tray-weather" width="24" height="28" viewBox="0 0 24 28"><path d="M13 1q-5 6-1 12l-4 2z" fill="#f4a72a"/><ellipse cx="12" cy="20" rx="11" ry="7" fill="#9cc7ec"/></svg>
        <span class="tray-temp">1°C</span>
        <svg class="tray-caret" width="12" height="7" viewBox="0 0 12 7"><path d="M1 6l5-5 5 5" fill="none" stroke="#fff"/></svg>
        <svg width="14" height="16" viewBox="0 0 14 16"><path d="M3 3h10v10H3zM0 8h3M5 3V0M10 3V0" fill="none" stroke="#fff"/></svg>
        <svg width="16" height="16" viewBox="0 0 16 16"><path d="M1 6h3l4-4v12l-4-4H1zM11 4q2 4 0 8M13.500 2q3 6 0 12" fill="none" stroke="#fff"/></svg>
        <svg width="15" height="16" viewBox="0 0 15 16"><path d="M1 15a13 13 0 0 1 13-13M5 15a9 9 0 0 1 9-9M9 15a5 5 0 0 1 5-5" fill="none" stroke="#dfe3e7" stroke-dasharray="2 1"/></svg>
        <div class="clock"><span>16:52</span><span>10.02.2025</span></div>
        <svg class="tray-note" width="16" height="17" viewBox="0 0 16 17"><path d="M1 1h14v12h-5l-2 3-2-3H1z" fill="none" stroke="#fff"/></svg>
    </div>
</div>

<div class="watermark">
    <div class="wm-title">Windows'u Etkinleştir</div>
    <div class="wm-sub">Windows'u etkinleştirmek için Ayarlar'a gidin.</div>
</div>
</body>
</html>
```
FILE: styles.css
```css
* {
    box-sizing: border-box;
}

html, body {
    margin: 0;
    padding: 0;
    height: 1080px;
    overflow: hidden;
}

body {
    position: relative;
    display: flex;
    flex-direction: column;
    width: 1920px;
    background-color: #0e1525;
    font-family: Roboto, sans-serif;
    color: #f5f9fc;
}

ul {
    list-style: none;
    margin: 0;
    padding: 0;
}

.defs {
    position: absolute;
}

/* browser chrome */
.tabstrip {
    display: flex;
    align-items: center;
    height: 40px;
    padding-left: 6px;
    background-color: #d3e3fd;
    color: #45474a;
    font-family: "Liberation Sans", sans-serif;
    font-size: 12px;
}

.tab-search {
    display: flex;
    align-items: center;
    justify-content: center;
    flex: none;
    width: 28px;
    height: 28px;
    margin-right: 4px;
    border-radius: 8px;
    background-color: #e9f0fd;
}

.ctab {
    display: flex;
    align-items: center;
    flex: none;
    width: 69.2px;
    height: 24px;
    padding-left: 10px;
    border-right: 1px solid #a8c5ee;
    overflow: hidden;
}

.ctab-active {
    width: 63px;
    height: 40px;
    margin: 0 4px 0 5px;
    padding-left: 12px;
    border: 0;
    border-radius: 10px 10px 0 0;
    background-color: #fff;
}

.ctab-close {
    margin-left: 14px;
}

.fav {
    display: flex;
    flex: none;
    align-items: center;
    justify-content: center;
    width: 16px;
    height: 16px;
    overflow: hidden;
}

.fav-s {
    background-color: #ffe500;
    color: #111;
    font-weight: 700;
    font-size: 14px;
}

.fav-tgrt {
    color: #6a2730;
    font-size: 4.5px;
    font-weight: 700;
    letter-spacing: -0.3px;
}

.ctab-title {
    flex: none;
    width: 26px;
    margin-left: 8px;
    overflow: hidden;
    white-space: nowrap;
    -webkit-mask-image: linear-gradient(90deg, #000 70%, transparent);
    mask-image: linear-gradient(90deg, #000 70%, transparent);
}

.tab-plus {
    margin-left: 8px;
    color: #3c4043;
    font-size: 20px;
    font-weight: 400;
}

.win-controls {
    display: flex;
    align-items: center;
    gap: 34px;
    margin-left: auto;
    padding-right: 17px;
}

.toolbar {
    display: flex;
    align-items: center;
    height: 47px;
    padding: 0 14px;
    background-color: #fff;
    border-bottom: 1px solid #e4e6ea;
    border-radius: 10px 10px 0 0;
}

.tool-ic {
    flex: none;
    width: 16px;
    height: 16px;
    margin-right: 20px;
}

.omnibox {
    display: flex;
    align-items: center;
    flex: none;
    width: 1518px;
    height: 34px;
    margin-left: -3px;
    padding: 0 14px 0 5px;
    border-radius: 17px;
    background-color: #edf2fa;
}

.omni-tune {
    display: flex;
    align-items: center;
    justify-content: center;
    width: 24px;
    height: 24px;
    border-radius: 50%;
    background-color: #fff;
}

.omni-url {
    margin-left: 9px;
    color: #1f1f1f;
    font-family: "Liberation Sans", sans-serif;
    font-size: 14.2px;
}

.omni-icons {
    display: flex;
    gap: 14px;
    margin-left: auto;
}

.ext-icons {
    display: flex;
    align-items: center;
    gap: 18px;
    margin-left: 18px;
}

.ext-sep {
    width: 1px;
    height: 24px;
    margin-right: -2px;
    background-color: #d3e3fd;
}

.profile {
    display: flex;
    align-items: center;
    justify-content: center;
    width: 20px;
    height: 20px;
    border-radius: 50%;
    background-color: #0a0a0a;
}

.profile-mark {
    width: 9px;
    height: 5px;
    background-color: #a3272b;
}

.ext-dots {
    color: #474747;
    margin-left: 6px;
}

/* replit top bar */
.topbar {
    display: flex;
    align-items: center;
    height: 48px;
    padding-left: 16px;
    background-color: #0e1525;
    font-family: "Noto Sans", sans-serif;
}

.top-left {
    display: flex;
    align-items: center;
    width: 884px;
}

.top-home {
    margin-right: 15px;
}

.repl-logo {
    display: flex;
    align-items: center;
    justify-content: center;
    width: 19px;
    height: 22px;
    margin-right: 7px;
    border-radius: 4px;
    background-color: #05070d;
}

.repl-name {
    font-size: 14px;
    width: 78px;
}

.top-search {
    margin-left: 16px;
}

.run-btn {
    display: flex;
    height: 32px;
    border-radius: 4px;
    overflow: hidden;
    font-size: 14px;
    font-weight: 600;
}

.run-icon {
    display: flex;
    align-items: center;
    justify-content: center;
    width: 24px;
    background-color: #2d2470;
}

.run-label {
    display: flex;
    align-items: center;
    justify-content: center;
    width: 68px;
    background-color: #5237cc;
    border-radius: 4px;
}

.top-right {
    display: flex;
    align-items: center;
    margin-left: auto;
    padding-right: 19px;
    color: #dfe1e6;
}

.top-btn {
    display: flex;
    align-items: center;
    justify-content: center;
    gap: 6px;
    width: 79px;
    height: 32px;
    margin-right: 6px;
    border-radius: 4px;
    background-color: #1c2333;
    color: #f0f1f3;
    font-size: 14px;
}

.top-btn + .top-btn {
    width: 86px;
}

.top-bell {
    margin: 0 19px 0 8px;
}

.top-avatar {
    position: relative;
    display: flex;
    align-items: center;
    justify-content: center;
    width: 24px;
    height: 24px;
    margin-right: 4px;
    border-radius: 50%;
    background-color: #3c4358;
    color: #b4b8c2;
    font-size: 9px;
}

.top-dot {
    position: absolute;
    left: -6px;
    bottom: -4px;
    width: 10px;
    height: 10px;
    border-radius: 50%;
    background-color: #a84a0e;
}

/* workspace */
.workspace {
    display: flex;
    flex: none;
    height: 905px;
    padding-bottom: 8px;
    background-color: #0e1525;
}

.rail {
    display: flex;
    flex-direction: column;
    align-items: center;
    flex: none;
    width: 48px;
    height: 897px;
}

.rail-toggle {
    display: flex;
    align-items: center;
    justify-content: center;
    width: 32px;
    height: 32px;
    border: 1px solid #2b3245;
    border-radius: 4px;
}

.rail-spacer {
    height: 286px;
}

.rail-item {
    position: relative;
    display: flex;
    align-items: center;
    justify-content: center;
    height: 36px;
    width: 48px;
}

.rail-dot::before {
    content: "";
    position: absolute;
    left: 10px;
    top: 17px;
    width: 3px;
    height: 3px;
    border-radius: 50%;
    background-color: #c9ccd3;
}

.rail-sep {
    width: 24px;
    margin: 6px 0;
    border: 0;
    border-top: 1px solid #2b3245;
}

.rail-purple {
    color: #9c8cf0;
}

.rail-yellow {
    color: #e8c15a;
}

.rail-white {
    color: #e6e8ec;
}

.rail-green {
    color: #5cc47e;
}

.rail-help {
    margin-top: auto;
    margin-bottom: 6px;
    color: #d5d7dc;
    font-size: 16px;
}

.files {
    flex: none;
    width: 227px;
    height: 897px;
    padding: 0 6px 0 7px;
    border-radius: 6px;
    background-color: #171e2e;
    color: #d5d7dc;
    font-size: 13.5px;
}

.files-head {
    display: flex;
    align-items: center;
    gap: 8px;
    height: 33px;
    color: #f5f9fc;
}

.files-title {
    font-size: 13.5px;
}

.files-dots {
    margin-left: auto;
    margin-right: 10px;
    color: #c5c8cf;
}

.files-search {
    display: flex;
    align-items: center;
    height: 28px;
    margin: 4px 3px 8px 2px;
    padding-left: 8px;
    border-radius: 4px;
    background-color: #1f2636;
    color: #8a96a4;
    font-size: 12.5px;
}

.file {
    display: flex;
    align-items: center;
    height: 24px;
    padding-left: 2px;
    white-space: nowrap;
}

.file svg {
    flex: none;
    width: 15px;
    height: 15px;
    margin-right: 6px;
    color: #c5c8cf;
}

.file-nested {
    margin-left: 3px;
    padding-left: 8px;
    border-left: 1px solid #2b3245;
}

.files-group {
    margin: 5px 0 0;
    padding: 11px 0 4px;
    border-top: 1px dashed #2b3245;
    color: #c5c8cf;
    font-size: 12px;
    line-height: 17px;
}

.files-actions {
    display: flex;
    gap: 4px;
    margin: 15px 0 0 -2px;
}

.files-btn {
    display: flex;
    align-items: center;
    justify-content: center;
    gap: 8px;
    flex: 1;
    height: 28px;
    border: 1px solid #2b3245;
    border-radius: 4px;
    color: #e9ebee;
    font-size: 12.5px;
    font-weight: 500;
}

/* agent */
.agent {
    display: flex;
    flex-direction: column;
    flex: none;
    width: 372px;
    height: 897px;
    margin-left: 6px;
    border-radius: 6px;
    background-color: #1c2333;
    overflow: hidden;
    font-size: 14px;
}

.agent-tabs,
.pane-tabs {
    display: flex;
    align-items: center;
    flex: none;
    height: 31px;
    border-bottom: 1px solid #2b3245;
    background-color: #171e2e;
}

.agent-tab {
    display: flex;
    align-items: center;
    gap: 7px;
    width: 97px;
    height: 31px;
    padding-left: 5px;
    border-top: 1px solid #0079f2;
    border-right: 1px solid #2b3245;
    border-bottom: 1px solid #171e2e;
    background-color: #171e2e;
    color: #f5f9fc;
    font-size: 13.2px;
}

.tab-x {
    margin-left: auto;
    padding-right: 6px;
    color: #b9bcc4;
    font-size: 15px;
}

.tabs-plus {
    margin-left: 11px;
    color: #b9bcc4;
    font-size: 17px;
    line-height: 1;
}

.tabs-dots {
    margin-left: auto;
    margin-right: 14px;
    color: #c5c8cf;
}

.agent-bar {
    display: flex;
    align-items: center;
    flex: none;
    height: 24px;
    padding: 6px 0 0 9px;
    font-size: 12.5px;
    font-weight: 500;
}

.bar-plus {
    margin-left: 19px;
    margin-right: 9px;
    color: #c5c8cf;
    font-size: 16px;
    font-weight: 400;
    line-height: 1;
}

.bar-new {
    width: 99px;
    color: #e9ebee;
}

.bar-name {
    width: 46px;
    color: #e9ebee;
}

.bar-gauge {
    margin-left: auto;
    margin-right: 8px;
    color: #d5d7dc;
}

.chat {
    flex: 1;
    min-height: 0;
    overflow: hidden;
}

.bubble-clip {
    height: 18px;
    margin: 0 40px 0 38px;
    border-radius: 0 0 6px 6px;
    background-color: #20283a;
}

.stamp {
    margin: 7px 0 0 46px;
    color: #9da2ae;
    font-size: 12.2px;
    line-height: 16px;
}

.stamp-first {
    margin-top: 8px;
}

.stamp-right {
    margin: 7px 48px 0 0;
    text-align: right;
}

.bubble {
    border-radius: 6px;
    color: #f5f9fc;
    line-height: 22.4px;
}

.msg-user {
    display: flex;
    align-items: flex-start;
    margin: 27px 0 0 40px;
}

.bubble-user {
    width: 292px;
    padding: 6px 8px;
    background-color: #0f4680;
}

.chat-avatar {
    display: flex;
    align-items: center;
    justify-content: center;
    width: 24px;
    height: 24px;
    margin: 6px 0 0 8px;
    border: 1px solid #3c4358;
    border-radius: 50%;
    background-color: #2b3245;
    color: #9da2ae;
    font-size: 9px;
}

.msg-agent {
    display: flex;
    align-items: flex-start;
    gap: 8px;
    margin: 17px 0 0 8px;
}

.msg-agent > svg {
    flex: none;
    margin-top: 7px;
}

.bubble-agent,
.bubble-ask {
    width: 294px;
    padding: 6px 8px;
}

.bubble-agent {
    height: 80px;
    background-color: #2b3245;
}

.msg-ask {
    margin-top: 16px;
}

.bubble-ask {
    background-color: #2d2e5c;
}

.actions {
    margin: 24px 0 0 44px;
    color: #c5c8cf;
}

.actions li {
    display: flex;
    align-items: center;
    gap: 7px;
    height: 32px;
    white-space: pre;
}

.actions svg {
    flex: none;
    width: 16px;
}

.actions code {
    font-family: "Liberation Mono", monospace;
    font-size: 14px;
}

.checkpoint {
    height: 118px;
    margin: 15px 40px 0 40px;
    padding: 0 8px 0 30px;
    border-radius: 6px;
    background-color: #2b3245;
}

.check-row {
    position: relative;
    display: flex;
    align-items: center;
    height: 34px;
    font-size: 12.2px;
    white-space: nowrap;
}

.check-row > svg:first-child {
    position: absolute;
    left: -22px;
}

.check-name {
    width: 88px;
    color: #b9bcc4;
}

.check-time {
    width: 81px;
    color: #9da2ae;
}

.check-sep {
    width: 4px;
    height: 4px;
    margin-right: 5px;
    background-color: #c5c8cf;
}

.check-hash {
    color: #f5f9fc;
    font-weight: 500;
}

.check-gauge {
    margin-left: auto;
    color: #d5d7dc;
}

.check-msg {
    color: #f5f9fc;
    line-height: 22px;
    margin-top: -2px;
}

.check-btn {
    display: flex;
    align-items: center;
    justify-content: center;
    gap: 7px;
    height: 28px;
    margin-top: 6px;
    border: 1px solid #4b5367;
    border-radius: 3px;
    color: #e9ebee;
    font-size: 12.5px;
    font-weight: 500;
}

.paused {
    display: flex;
    align-items: center;
    flex: none;
    height: 29px;
    margin: 0 16px;
    padding-left: 11px;
    border-radius: 4px 4px 0 0;
    background-color: #2b3245;
    color: #9da2ae;
    white-space: pre;
}

.paused svg {
    margin-right: 10px;
}

.paused b {
    color: #d5d7dc;
    font-weight: 500;
}

.composer {
    flex: none;
    height: 74px;
    margin: 0 8px 9px;
    padding: 8px 7px 7px 10px;
    border: 1px solid #6f5ff0;
    border-radius: 6px;
    background-color: #2b3245;
}

.composer-input {
    position: relative;
    color: #8b909c;
    font-size: 14px;
    line-height: 20px;
}

.caret {
    position: absolute;
    left: -1px;
    top: 1px;
    width: 1px;
    height: 18px;
    background-color: #f5f9fc;
}

.composer-foot {
    display: flex;
    align-items: center;
    margin-top: 12px;
}

.composer-foot > svg {
    margin-left: 1px;
}

.feedback {
    margin-left: auto;
    margin-right: 18px;
    color: #9da2ae;
    font-size: 12.5px;
}

.send {
    display: flex;
    align-items: center;
    justify-content: center;
    width: 24px;
    height: 24px;
    border-radius: 4px;
    background-color: #414143;
}

/* right pane */
.pane {
    display: flex;
    flex-direction: column;
    flex: none;
    width: 1253px;
    height: 897px;
    margin-left: 7px;
    border-radius: 6px;
    overflow: hidden;
    background-color: #1c2333;
}

.pane-tab {
    display: flex;
    align-items: center;
    gap: 7px;
    height: 31px;
    padding-left: 6px;
    border-right: 1px solid #2b3245;
    color: #d5d7dc;
    font-size: 13.2px;
}

.pane-tab-webview {
    width: 107px;
    background-color: #171e2e;
}

.pane-tab-on {
    width: 106px;
    padding-left: 8px;
    border-bottom: 1px solid #171e2e;
    color: #f5f9fc;
}

.pane-tab-console {
    width: 101px;
    gap: 8px;
    padding-left: 7px;
}

.pane-tab-git {
    width: 97px;
    gap: 6px;
    padding-left: 8px;
}

.tc-gray {
    color: #9da2ae;
}

.tc-purple {
    color: #a99cf0;
}

.tc-yellow {
    color: #d9b44a;
}

.tc-green {
    color: #3f8f5e;
}

.pane-body {
    flex: 1;
    min-height: 0;
    padding: 9px 8px 10px 7px;
}

.webframe {
    display: flex;
    flex-direction: column;
    height: 100%;
    border: 2px solid #5138c9;
    border-top: 0;
    border-radius: 8px;
    overflow: hidden;
    background-color: #5138c9;
}

.feedback-bar {
    display: flex;
    align-items: center;
    gap: 16px;
    flex: none;
    height: 36px;
    padding: 0 15px 0 12px;
    color: #d9d5f5;
    font-size: 14px;
}

.feedback-text {
    flex: none;
    width: 544px;
    margin-left: -4px;
}

.drag-handle {
    flex: none;
    width: 49px;
    height: 4px;
    margin-right: auto;
    border-radius: 2px;
    background-color: #d0cef0;
}

.pin {
    margin-left: 3px;
}

.web-tools {
    display: flex;
    align-items: center;
    flex: none;
    gap: 4px;
    height: 33px;
    padding: 0 6px 0 10px;
    background-color: #1c2333;
}

.web-tools > svg {
    margin-right: 12px;
}

.url-field {
    display: flex;
    align-items: center;
    flex: none;
    width: 977px;
    height: 24px;
    margin-left: -6px;
    padding-right: 8px;
    border: 1px solid #3c4358;
    border-radius: 4px;
    background-color: #2b3245;
    font-size: 13.3px;
}

.url-field svg {
    margin-left: auto;
}

.url-host {
    flex: none;
    width: 91px;
    height: 22px;
    padding: 0 4px;
    border-right: 1px solid #3c4358;
    color: #5dc26d;
    line-height: 20px;
    white-space: nowrap;
}

.url-host b {
    display: inline-block;
    height: 20px;
    padding: 0 1px;
    border-radius: 3px;
    background-color: #0b5a12;
    color: #6fe07a;
    font-weight: 400;
}

.url-path {
    margin-left: 8px;
    color: #f5f9fc;
}

.web-btn {
    display: flex;
    align-items: center;
    justify-content: center;
    gap: 8px;
    width: 24px;
    height: 24px;
    margin-left: 1px;
    border: 1px solid #3c4358;
    border-radius: 5px;
    color: #d5d7dc;
    font-size: 13px;
}

.web-btn-wide {
    width: 76px;
}

/* the page inside the webview */
.page {
    display: flex;
    flex: 1;
    min-height: 0;
    background-color: #fff;
    color: #0a0a0a;
    overflow: hidden;
    font-family: "Noto Sans", sans-serif;
}

.side {
    flex: none;
    width: 257px;
    border-right: 1px solid #e8e8e8;
    font-size: 13.5px;
}

.side-brand {
    display: flex;
    align-items: center;
    height: 56px;
    padding-left: 16px;
    border-bottom: 1px solid #e5e5e5;
    font-size: 17px;
    font-weight: 500;
}

.side-nav {
    padding: 8px;
}

.side-nav li,
.side-exit {
    display: flex;
    align-items: center;
    gap: 12px;
    height: 40px;
    padding-left: 16px;
    border-radius: 8px;
    color: #262626;
}

.side-nav li.side-on {
    background-color: #f4f4f3;
}

.side-nav svg,
.side-exit svg {
    flex: none;
    width: 16px;
    height: 16px;
    color: #262626;
}

.side-foot {
    padding: 8px;
    border-top: 1px solid #e5e5e5;
}

.main {
    flex: 1;
    min-width: 0;
}

.main-head {
    display: flex;
    align-items: center;
    justify-content: flex-end;
    height: 56px;
    padding-right: 17px;
    border-bottom: 1px solid #e5e5e5;
}

.user-chip {
    display: flex;
    align-items: center;
    justify-content: center;
    width: 32px;
    height: 32px;
    border-radius: 50%;
    background-color: #f4f4f3;
    font-size: 13.5px;
    font-weight: 500;
}

.main-body {
    height: 800px;
    margin-top: 16px;
    padding: 24px 26px 0 23px;
    background-color: #fafbfc;
}

.main-body h1 {
    margin: 0;
    color: #111827;
    font-size: 34px;
    font-weight: 700;
    letter-spacing: -1px;
    line-height: 42px;
}

.lead {
    margin: 9px 0 0;
    color: #6b7280;
    font-size: 16.8px;
    line-height: 24px;
}

.stats {
    display: grid;
    grid-template-columns: repeat(4, 1fr);
    gap: 25px 24px;
    margin-top: 25px;
}

.stat,
.chart-card {
    border: 1px solid #f3f4f6;
    border-radius: 8px;
    background-color: #fff;
    box-shadow: 0 1px 3px rgba(0, 0, 0, 0.06);
}

.stat {
    height: 125px;
    padding: 24px;
}

.stat-top {
    display: flex;
    align-items: center;
    justify-content: space-between;
    height: 20px;
    color: #374151;
    font-size: 13.2px;
    font-weight: 500;
}

.stat-top svg {
    flex: none;
    width: 16px;
    height: 16px;
}

.stat-val {
    margin-top: 10px;
    font-size: 23.5px;
    font-weight: 700;
    line-height: 30px;
}

.stat-sub {
    color: #6b7280;
    font-size: 11.5px;
    line-height: 16px;
}

.c-indigo .stat-val, .c-indigo svg { color: #6366f1; }
.c-pink .stat-val, .c-pink svg { color: #ec4899; }
.c-green .stat-val, .c-green svg { color: #22c55e; }
.c-amber .stat-val, .c-amber svg { color: #eab308; }
.c-sky .stat-val, .c-sky svg { color: #0ea5e9; }
.c-purple .stat-val, .c-purple svg { color: #a855f7; }
.c-orange .stat-val, .c-orange svg { color: #f97316; }
.c-teal .stat-val, .c-teal svg { color: #14b8a6; }

.charts {
    display: grid;
    grid-template-columns: repeat(2, 1fr);
    gap: 24px;
    margin-top: 25px;
}

.chart-card {
    height: 420px;
    padding: 25px 23px 0;
}

.chart-card h3 {
    margin: 0;
    color: #1f2937;
    font-size: 14.3px;
    font-weight: 500;
    line-height: 24px;
}

.chart {
    display: block;
    width: 395px;
    height: 240px;
    margin-top: 10px;
}

.grid-lines path {
    fill: none;
    stroke: #e5e7eb;
    stroke-dasharray: 3 3;
}

.axis {
    fill: none;
    stroke: #9ca3af;
}

.axis-text text {
    fill: #6b7280;
    font-family: "Noto Sans", sans-serif;
    font-size: 11.5px;
    text-anchor: end;
}

.line {
    fill: none;
    stroke: #6366f1;
    stroke-width: 2;
}

.dots circle {
    fill: #fff;
    stroke: #6366f1;
    stroke-width: 2;
}

.scrollbar {
    display: flex;
    flex-direction: column;
    align-items: center;
    flex: none;
    width: 15px;
    height: 100%;
    background-color: #f1f1f1;
}

.arrow-up,
.arrow-down {
    flex: none;
    width: 0;
    height: 0;
    margin: 6px 0 5px;
    border-left: 4px solid transparent;
    border-right: 4px solid transparent;
}

.arrow-up {
    border-bottom: 5px solid #a3a3a3;
}

.arrow-down {
    margin-top: auto;
    margin-bottom: 4px;
    border-top: 5px solid #505050;
}

.thumb {
    flex: none;
    width: 100%;
    height: 433px;
    background-color: #c1c1c1;
}

/* taskbar */
.taskbar {
    display: flex;
    align-items: center;
    flex: none;
    height: 40px;
    background: linear-gradient(90deg, #25394a, #2b4257 50%, #2c4459);
}

.task-apps {
    display: flex;
}

.app {
    position: relative;
    display: flex;
    align-items: center;
    justify-content: center;
    flex: none;
    width: 49px;
    height: 40px;
}

.app-active {
    background-color: #1a5f96;
}

.app-active::after,
.app-run::after,
.app-run-short::after {
    content: "";
    position: absolute;
    left: 0;
    right: 0;
    bottom: 0;
    height: 2px;
    background-color: #8fc5ef;
}

.app-run::after {
    left: 5px;
    right: 5px;
}

.app-run-short::after {
    left: 6px;
    right: 10px;
}

.chrome-badge {
    position: absolute;
    left: 26px;
    top: 20px;
    width: 16px;
    height: 18px;
    border-radius: 50%;
    background-color: #0a0a0a;
}

.tile {
    display: flex;
    align-items: center;
    justify-content: center;
    width: 24px;
    height: 24px;
    border-radius: 3px;
    font-family: "Liberation Sans", sans-serif;
    font-size: 13px;
    font-weight: 700;
}

.tile-ae { background-color: #00005b; color: #9999ff; }
.tile-ai { background-color: #330000; color: #ff9a00; }
.tile-pr { background-color: #00005b; color: #9999ff; }
.tile-fz { background-color: #8f0000; color: #fff; font-size: 17px; height: 26px; }
.tile-ps { background-color: #001e36; color: #31a8ff; border: 1px solid #31a8ff; }
.tile-sublime { background-color: #4a4a4a; color: #ff9800; font-size: 19px; }
.tile-cap { background-color: #fff; border-radius: 6px; }

.tray {
    display: flex;
    align-items: center;
    margin-left: auto;
    color: #fff;
}

.tray > svg {
    margin-right: 10px;
}

.tray .tray-weather {
    margin-right: 2px;
}

.tray-temp {
    margin-right: 27px;
    font-size: 13px;
}

.clock {
    display: flex;
    flex-direction: column;
    align-items: center;
    margin: 0 16px 0 -6px;
    font-size: 12px;
    line-height: 18px;
}

.tray .tray-note {
    margin-right: 25px;
}

/* activation notice */
.watermark {
    position: absolute;
    left: 1540px;
    top: 944px;
    color: rgba(110, 110, 110, 0.6);
    font-family: "Noto Sans", sans-serif;
    white-space: nowrap;
    pointer-events: none;
}

.wm-title {
    font-size: 18.5px;
    line-height: 28px;
}

.wm-sub {
    font-size: 14px;
    line-height: 18px;
}
```
